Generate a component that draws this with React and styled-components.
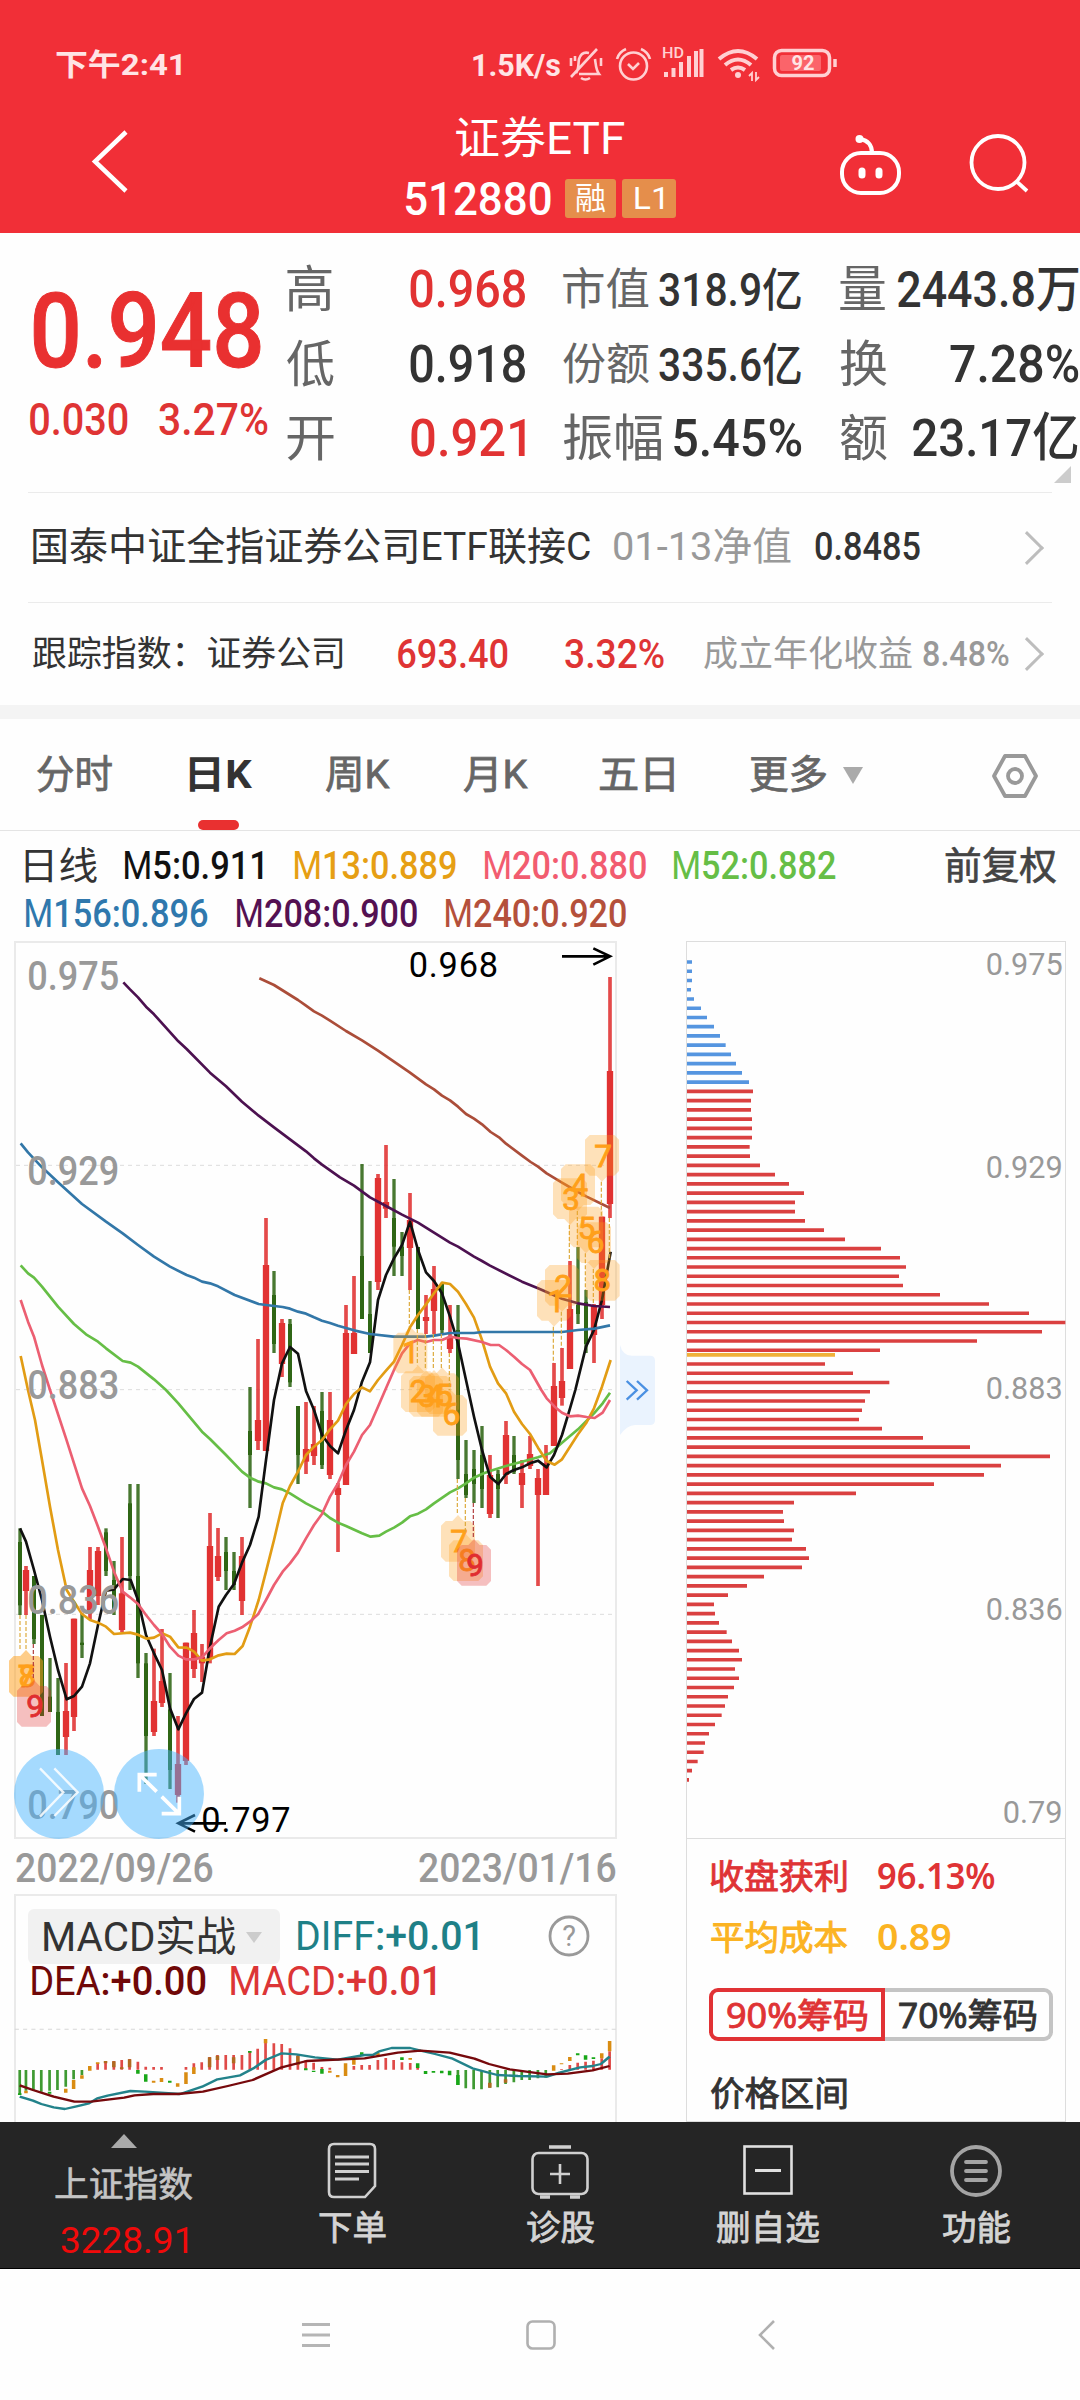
import { useLayoutEffect, useRef, useState } from "react"
import styled, { createGlobalStyle } from "styled-components"

const GlobalStyle = createGlobalStyle`
  * { box-sizing: border-box; }
  body {
    margin: 0;
    background: #fff;
    font-family: Roboto, "Noto Sans CJK SC", sans-serif;
    color: #333;
  }
  svg { display: block; flex: none; overflow: visible; }
`;

const FitBox = styled.span`
  display: block;
  flex: none;
  width: ${p => p.$w}px;
  height: ${p => p.$size}px;
  margin-left: ${p => p.$ml || 0}px;
  font-size: ${p => p.$size}px;
  line-height: ${p => p.$size}px;
  font-weight: ${p => p.$weight || 400};
  color: ${p => p.$color || "inherit"};
  -webkit-text-stroke: ${p => p.$stroke || 0}px currentColor;
  white-space: nowrap;
`;

const FitInner = styled.span`
  display: inline-block;
  transform-origin: 0 50%;
`;

// Squeezes a label so that its ink fills exactly w pixels
function Fit({ w, size, ml, weight, color, stroke, children }) {
  const ref = useRef(null)
  const [transform, setTransform] = useState("none")

  useLayoutEffect(() => {
    const el = ref.current
    const css = getComputedStyle(el)
    const ctx = document.createElement("canvas").getContext("2d")
    ctx.font = `${css.fontWeight} ${css.fontSize} ${css.fontFamily}`
    const m = ctx.measureText(el.textContent)
    const k = w / (m.actualBoundingBoxLeft + m.actualBoundingBoxRight)
    setTransform(`translateX(${m.actualBoundingBoxLeft * k}px) scaleX(${k})`)
  }, [w, size, weight, children])

  return (
    <FitBox $w={w} $size={size} $ml={ml} $weight={weight} $color={color} $stroke={stroke}>
      <FitInner ref={ref} style={{ transform }}>{children}</FitInner>
    </FitBox>
  )
}

const Screen = styled.div`
  width: 1080px;
  height: 2400px;
  overflow: hidden;
  display: flex;
  flex-direction: column;
  background: #fefefe;
`;

/* ---------- header ---------- */

const Header = styled.header`
  flex: none;
  height: 233px;
  background: #f12f37;
  color: #fff;
`;

const StatusBar = styled.div`
  display: flex;
  align-items: center;
  height: 100px;
  padding: 30px 0 0 56px;
  color: #ffe4e5;
`;

const StatusIcons = styled.div`
  display: flex;
  align-items: center;
  margin-left: 8px;
`;

const TitleBar = styled.div`
  display: grid;
  grid-template-columns: 405px 271px 1fr;
  height: 133px;
`;

const BackButton = styled.div`
  padding: 30px 0 0 91px;
`;

const TitleBlock = styled.div`
  display: flex;
  flex-direction: column;
  align-items: center;
  gap: 18px;
  padding-top: 17px;
`;

const CodeLine = styled.div`
  display: flex;
  align-items: center;
  height: 39px;
`;

const Tag = styled.span`
  display: flex;
  align-items: center;
  justify-content: center;
  width: ${p => p.$w}px;
  height: 39px;
  margin-left: ${p => p.$ml}px;
  border-radius: 3px;
  background: #e58e4b;
`;

const TitleActions = styled.div`
  display: flex;
  gap: 68px;
  padding: 33px 0 0 163px;
`;

/* ---------- quote ---------- */

const Quote = styled.section`
  position: relative;
  flex: none;
  display: flex;
  height: 259px;
`;

const PriceBlock = styled.div`
  width: 286.5px;
  padding: 47px 0 0 30px;
`;

const ChangeLine = styled.div`
  display: flex;
  margin-top: 13px;
`;

const StatGrid = styled.div`
  display: grid;
  grid-template-columns: 238px 238px 238px;
  grid-auto-rows: 74.5px;
  column-gap: 38.5px;
  padding-top: 20px;
`;

const Stat = styled.div`
  display: flex;
  align-items: center;
  justify-content: space-between;
`;

const Corner = styled.i`
  position: absolute;
  right: 9px;
  bottom: 9px;
  border-left: 17px solid transparent;
  border-bottom: 17px solid #ccc;
`;

const InfoRow = styled.div`
  flex: none;
  display: flex;
  align-items: center;
  height: ${p => p.$h}px;
  margin: 0 28px;
  padding: 0 0 0 5px;
  border-top: 1px solid #ebebeb;
`;

const Band = styled.div`
  flex: none;
  height: 14px;
  background: #f4f4f4;
`;

/* ---------- tabs ---------- */

const Tabs = styled.nav`
  flex: none;
  display: flex;
  align-items: center;
  height: 112px;
  padding: 2px 0 0 37px;
  border-bottom: 1px solid #e4e4e4;
  color: #666;
`;

const Tab = styled.div`
  position: relative;
  display: flex;
  align-items: center;
  height: 100%;
  margin-left: ${p => p.$ml || 0}px;
  color: ${p => (p.$active ? "#333" : "inherit")};

  &::after {
    content: "";
    display: ${p => (p.$active ? "block" : "none")};
    position: absolute;
    left: 8px;
    bottom: 0;
    width: 41px;
    height: 10px;
    border-radius: 5px;
    background: #e93030;
  }
`;

const Caret = styled.i`
  margin-left: ${p => p.$ml}px;
  border: ${p => p.$half}px solid transparent;
  border-top: ${p => p.$h}px solid ${p => p.$color};
  border-bottom: 0;
`;

const Legend = styled.div`
  flex: none;
  height: 110px;
  padding: 11px 0 0 25px;
`;

const LegendRow = styled.div`
  display: flex;
  align-items: center;
  height: 48px;
`;

const Thin = styled.span`
  font-weight: 400;
`;

/* ---------- charts ---------- */

const Charts = styled.main`
  flex: none;
  display: flex;
  height: 1181px;
  padding-left: 14px;
  overflow: hidden;
`;

const LeftColumn = styled.div`
  width: 603px;
`;

const KBox = styled.div`
  height: 898px;
  border: 2px solid #eaeaea;
`;

const Dates = styled.div`
  display: flex;
  align-items: center;
  justify-content: space-between;
  height: 55px;
  padding: 5px 1px 0 2px;
  color: #999;
`;

const MacdBox = styled.div`
  height: 240px;
  border: 2px solid #eaeaea;
`;

const MacdHead = styled.div`
  display: flex;
  align-items: center;
  height: 56px;
  margin: 12px 0 0 12px;
`;

const Chip = styled.div`
  display: flex;
  align-items: center;
  width: 252px;
  height: 55px;
  padding: 2px 0 0 16px;
  border-radius: 6px;
  background: #f1f1f1;
`;

const MacdSub = styled.div`
  display: flex;
  align-items: center;
  height: 32px;
  padding: 2px 0 0 15px;
`;

const HelpIcon = styled.svg`
  margin-left: 70px;
`;

const Drawer = styled.div`
  width: 35px;
  margin: 404px 31px 0 3px;
`;

const ChipPanel = styled.aside`
  width: 380px;
  border: 1px solid #ddd;
`;

const Distribution = styled.div`
  height: 897px;
  border-bottom: 1px solid #ddd;
`;

const ChipInfo = styled.div`
  padding: 6px 0 0 24px;
  font-family: "Noto Sans", "Noto Sans CJK SC", sans-serif;
`;

const ChipLine = styled.div`
  display: flex;
  align-items: center;
  height: 61px;
  color: ${p => p.$color};
`;

const Segment = styled.div`
  display: flex;
  margin: 21px 0 21px -2px;
`;

const SegmentItem = styled.div`
  display: flex;
  align-items: center;
  justify-content: center;
  width: ${p => (p.$active ? 176 : 168)}px;
  height: 53px;
  border: 4px solid ${p => (p.$active ? "#e13235" : "#c4c4c4")};
  border-left-width: ${p => (p.$active ? 4 : 0)}px;
  border-radius: ${p => (p.$active ? "9px 0 0 9px" : "0 9px 9px 0")};
  color: ${p => (p.$active ? "#df3335" : "#333")};
`;

/* ---------- bottom ---------- */

const Toolbar = styled.footer`
  flex: none;
  display: grid;
  grid-template-columns: 248px 208px 208px 208px 208px;
  height: 147px;
  border-bottom: 1px solid #000;
  background: #252525;
  color: #d4d4d4;
`;

const IndexItem = styled.div`
  display: flex;
  flex-direction: column;
  align-items: center;
  padding-top: 12px;
`;

const IndexArrow = styled.i`
  margin-bottom: 20px;
  border: 13px solid transparent;
  border-top: 0;
  border-bottom: 14px solid #aaa;
`;

const IndexValue = styled.div`
  margin-top: 20px;
`;

const Tool = styled.div`
  display: flex;
  flex-direction: column;
  align-items: center;
  padding-top: 18px;
  gap: 11px;
`;

const SystemNav = styled.div`
  display: flex;
  justify-content: space-between;
  align-items: center;
  width: 477px;
  height: 133px;
  margin-left: 300px;
`;

/* ---------- data ---------- */

const RED = "#e13232"
const GREEN = "#2f6615"

// [high, low, body top, body bottom, up]
const candles = [
  [1795, 2055, 1836, 2026, 0], [1908, 2055, 1920, 1983, 1], [1938, 2142, 1938, 2127, 0], [2055, 2358, 2055, 2358, 0],
  [2184, 2346, 2300, 2346, 0], [2244, 2475, 2346, 2475, 0], [2199, 2475, 2343, 2421, 1], [2066, 2403, 2066, 2361, 1],
  [2050, 2184, 2138, 2145, 0], [1851, 2068, 1920, 2050, 1], [1851, 2025, 1863, 1998, 1], [1795, 1938, 1807, 1923, 0],
  [1893, 2055, 1950, 2040, 0], [1821, 2106, 1990, 2100, 1], [1662, 1980, 1720, 1938, 0], [1662, 2244, 1938, 2200, 0],
  [2169, 2562, 2200, 2418, 0], [2156, 2418, 2313, 2406, 1], [2097, 2331, 2253, 2319, 1], [2229, 2577, 2338, 2520, 0],
  [2358, 2618, 2502, 2595, 1], [2138, 2505, 2138, 2493, 1], [2040, 2244, 2109, 2217, 1], [2142, 2256, 2180, 2200, 1],
  [1749, 2200, 1848, 2185, 1], [1794, 1953, 1878, 1941, 1], [1821, 1980, 1866, 1923, 0], [1866, 1980, 1923, 1965, 0],
  [1821, 2055, 1878, 2013, 1], [1371, 1734, 1503, 1575, 0], [1227, 1560, 1470, 1533, 1], [864, 1563, 1005, 1563, 1],
  [1023, 1269, 1095, 1242, 0], [1167, 1341, 1179, 1302, 1], [1167, 1371, 1182, 1357, 0], [1428, 1662, 1428, 1575, 0],
  [1416, 1632, 1557, 1595, 1], [1428, 1605, 1542, 1578, 1], [1386, 1617, 1443, 1605, 0], [1386, 1647, 1470, 1635, 1],
  [1659, 1866, 1674, 1695, 1], [1125, 1665, 1209, 1665, 1], [1038, 1272, 1209, 1272, 1], [702, 1167, 978, 1167, 0],
  [1053, 1269, 1152, 1269, 0], [732, 1080, 744, 1056, 1], [645, 864, 816, 836, 1], [747, 1038, 864, 950, 0],
  [906, 1038, 950, 978, 0], [789, 1080, 870, 954, 1], [951, 1197, 951, 1197, 0], [1095, 1212, 1161, 1173, 1],
  [1008, 1212, 1077, 1143, 1], [1062, 1212, 1062, 1200, 0], [1125, 1269, 1220, 1257, 1], [1125, 1647, 1200, 1590, 0],
  [1530, 1704, 1632, 1695, 0], [1560, 1719, 1617, 1662, 0], [1488, 1734, 1575, 1677, 0], [1575, 1764, 1635, 1752, 1],
  [1620, 1764, 1632, 1677, 0], [1473, 1662, 1515, 1635, 1], [1518, 1632, 1575, 1626, 0], [1590, 1734, 1629, 1665, 1],
  [1518, 1617, 1572, 1608, 1], [1617, 1968, 1644, 1695, 1], [1545, 1695, 1600, 1695, 1], [1299, 1548, 1368, 1548, 1],
  [1254, 1427, 1353, 1404, 1], [993, 1317, 1137, 1317, 1], [951, 1182, 1125, 1152, 0], [1080, 1269, 1116, 1242, 0],
  [1122, 1299, 1125, 1215, 1], [860, 1167, 860, 1125, 1], [141, 864, 423, 822, 1],
]

// the chart is split in four tiles; every run of points is local to its tile
const tiles = { tl: [0, 0], bl: [0, 1350], tr: [960, 0], br: [960, 1350] }
const trace = runs =>
  runs
    .map(([tile, pts]) =>
      pts
        .split(" ")
        .map(p => p.split(",").map((v, k) => +v + tiles[tile][k]).join(","))
        .join(" ")
    )
    .join(" ")

const averages = [
  { color: "#66be46", runs: [
    ["tl", "62,1006 84,1030 102,1043 126,1070 174,1130 222,1182 258,1213 294,1235 318,1255 368,1293 392,1298 414,1310 462,1348 498,1380"],
    ["bl", "535,70 606,155 630,177 678,225 726,275 750,293 776,305 798,310 822,322 846,328 870,340 918,370 966,395"],
    ["br", "30,414 54,428 78,438 126,460 152,470 178,467 198,455 222,443 246,428 270,409 294,401 318,388 342,370 390,337 414,325 438,310 462,293 486,282 510,273 558,258 606,245 654,232 690,220 726,188 774,148 822,100 848,70 870,38"],
  ] },
  { color: "#111", runs: [
    ["bl", "60,445 78,485 102,570 126,660 150,770 174,870 200,958 222,948 246,920 270,850 294,735 318,632 342,628 368,597 392,600 414,660 438,765 462,820 486,870 510,985 535,1048 558,1000 582,957 606,938 630,800 656,680 678,645 702,612 726,548 750,495 776,410 798,240 822,60"],
    ["tl", "846,1300 870,1251 894,1271 918,1383"],
    ["bl", "942,90 966,165"],
    ["br", "30,198 54,220 78,150 102,90 126,5"],
    ["tr", "150,1297 174,1110 198,1035 222,985 246,945 270,875 294,960 318,1027 342,1053 366,1090 390,1160 414,1240 438,1350"],
    ["br", "462,110 486,210 510,290 535,312 558,282 582,270 606,262 630,250 654,242 680,262 702,225 726,165 750,85"],
    ["tr", "766,1380 798,1250 822,1200 846,1110 872,965"],
  ] },
  { color: "#e29c14", runs: [
    ["tl", "62,1278 84,1380"],
    ["bl", "105,120 126,240 150,380 174,510 200,630 222,665 246,702 270,720 294,728 318,740 342,762 390,758 414,764 440,776 462,773 486,760 510,770 535,802 560,803 582,815 606,842 630,838 656,826 680,821 704,822 728,798 750,740 776,660 798,575 822,480 848,370 870,318 894,275 918,225 942,200 966,180"],
    ["br", "30,148 54,122 78,72 102,42 126,22 150,34"],
    ["tr", "174,1350 198,1322 222,1295 246,1245 270,1192 294,1155 318,1123 342,1090 366,1058 390,1062 414,1085 438,1122 462,1163 486,1230 510,1310 534,1360"],
    ["br", "558,40 582,95 606,132 630,162 654,203 680,243 704,254 726,238 750,200 774,163 798,130 822,85 846,20"],
    ["tr", "872,1290"],
  ] },
  { color: "#ec5f72", runs: [
    ["tl", "62,1110 84,1175 102,1220 126,1305 150,1380"],
    ["bl", "162,66 198,175 222,250 246,325 270,378 294,440 318,505 342,575 368,635 390,652 414,672 438,705 462,735 486,762 510,800 535,827 558,838 582,838 606,832 630,805 656,780 680,760 704,752 726,742 750,725 774,703 798,660 822,615 848,575 870,550 894,518 918,475 942,435 966,402"],
    ["br", "30,350 54,310 78,255 102,215 126,165 150,135 174,80 198,25"],
    ["tr", "222,1320 246,1270 270,1240 294,1230 318,1236 342,1230 366,1230 390,1220 414,1224 440,1226 486,1236 512,1245 537,1245 558,1260 582,1280 606,1302 630,1320 664,1380"],
    ["br", "680,55 704,80 726,98 750,109 774,107 800,111 824,114 848,98 870,60"],
  ] },
  { color: "#3277a8", runs: [
    ["tl", "62,640 84,667 126,712 174,757 246,822 318,875 368,910 414,945 462,980 510,1010 560,1035 582,1043 606,1055 630,1060 654,1069 704,1095 776,1122 798,1125 848,1131 870,1136 894,1145 918,1151 942,1162 966,1172"],
    ["tr", "30,1179 54,1187 102,1201 150,1212 220,1220 318,1220 342,1217 390,1209 462,1209 486,1206 726,1206 774,1200 824,1196 870,1186"],
  ] },
  { color: "#4c1150", runs: [
    ["tl", "370,157 390,178 414,202 438,230 462,253 535,334 560,357 630,428 678,469 726,515 776,557 822,592 870,628 918,664 942,685 966,704"],
    ["tr", "60,742 102,767 150,802 198,828 246,854 294,878 342,908 390,938 414,950 462,980 486,993 510,1007 606,1055 654,1075 702,1096 726,1106 774,1120 822,1128 870,1131"],
  ] },
  { color: "#ab4d39", runs: [
    ["tl", "778,145 822,165 894,210 918,227 942,244 966,257"],
    ["tr", "30,272 78,303 126,331 174,362 222,395 270,428 318,463 342,478 366,497 390,511 414,530 438,552 462,566 486,583 512,606 537,622 558,641 606,677 632,696 654,710 680,730 726,758 774,786 800,800 870,834"],
  ] },
]

// [digit, box left, box top, label x, label baseline, pointer side, dash x, dash from, dash to]
const signals = [
  ["7", 27, 2178, 80, 2272, "up", 60, 2055, 2162],
  ["8", 27, 2178, 82, 2272, "up", 78, 2055, 2162],
  ["9", 51, 2268, 105, 2360, "up", 100, 2142, 2250],
  ["1", 1180, 1208, 1232, 1299, "up", 1228, 1080, 1190],
  ["2", 1203, 1324, 1255, 1417, "up", 1252, 1197, 1306],
  ["3", 1227, 1338, 1281, 1430, "up", 1276, 1212, 1320],
  ["4", 1251, 1338, 1304, 1430, "up", 1300, 1212, 1320],
  ["5", 1275, 1330, 1332, 1428, "up", 1324, 1212, 1320],
  ["6", 1299, 1395, 1354, 1486, "up", 1348, 1269, 1380],
  ["7", 1323, 1773, 1377, 1865, "up", 1372, 1647, 1755],
  ["8", 1347, 1831, 1401, 1923, "up", 1396, 1704, 1812],
  ["9", 1371, 1845, 1425, 1937, "up", 1420, 1719, 1827],
  ["1", 1611, 1050, 1668, 1145, "down", 1660, 1190, 1299],
  ["2", 1635, 1005, 1689, 1102, "down", 1684, 1145, 1254],
  ["3", 1659, 745, 1713, 840, "down", 1708, 885, 993],
  ["4", 1683, 703, 1738, 797, "down", 1732, 843, 951],
  ["5", 1707, 830, 1760, 926, "down", 1756, 970, 1080],
  ["6", 1731, 877, 1787, 970, "down", 1780, 1017, 1122],
  ["7", 1755, 615, 1809, 710, "down", 1804, 755, 860],
  ["8", 1757, 990, 1807, 1083, "none", 1828, 864, 990],
]

const chipsAbove = [16, 16, 16, 13, 22, 43, 61, 82, 100, 117, 133, 148, 166, 187]
const chipsUpper = [
  199, 193, 193, 196, 196, 196, 189, 190, 220, 265, 307, 352, 325, 325, 355, 412, 475, 583, 640, 658, 637, 649, 760, 907,
  1027, 1136, 1066, 871, 580,
]
const chipsLower = [
  415, 499, 608, 550, 535, 526, 517, 586, 709, 850, 1090, 943, 892, 742, 508, 322, 289, 292, 322, 316, 358, 367, 346, 232,
  181, 124, 82, 85, 97, 120, 136, 157, 166, 145, 157, 142, 124, 115, 105, 85, 67, 55, 51, 33, 16, 7,
]

// [x, y1, y2] for each colour of the MACD histogram
const macdBars = [
  { color: "#3f9a32", bars: [
    [48, 720, 792], [63, 720, 782], [81, 720, 782], [100, 720, 785], [120, 720, 782], [139, 720, 780], [159, 720, 770],
    [178, 720, 748], [198, 720, 735], [1105, 720, 765], [1124, 720, 775], [1143, 720, 778], [1162, 720, 778],
    [1182, 720, 773], [1201, 720, 772], [1220, 720, 762], [1240, 720, 757], [1259, 720, 750], [1278, 720, 750],
    [1298, 720, 745], [1317, 720, 743],
  ] },
  { color: "#df4a48", bars: [
    [236, 700, 719], [255, 693, 719], [275, 693, 719], [294, 690, 719], [313, 687, 719], [333, 695, 719], [352, 710, 719],
    [371, 711, 719], [390, 711, 719], [449, 711, 719], [468, 700, 719], [487, 697, 719], [506, 681, 719], [525, 675, 719],
    [545, 675, 719], [564, 675, 719], [584, 675, 719], [603, 663, 719], [622, 656, 719], [641, 636, 719], [661, 640, 719],
    [680, 642, 719], [700, 655, 719], [719, 675, 719], [738, 690, 719], [757, 698, 719], [777, 711, 719], [796, 713, 719],
    [854, 708, 719], [873, 705, 719], [892, 705, 719], [912, 690, 719], [931, 684, 719], [950, 690, 719], [970, 697, 719],
    [990, 699, 719], [1008, 714, 719], [1355, 717, 719], [1375, 705, 719], [1394, 698, 719], [1413, 695, 719],
    [1432, 692, 719], [1452, 685, 719], [1471, 664, 719],
  ] },
]

const macdMarks = [
  { color: "#d98c12", bars: [
    [63, 782, 790], [159, 776, 788], [178, 750, 777], [198, 736, 746], [217, 708, 722], [236, 697, 702], [371, 752, 758],
    [390, 744, 756], [429, 760, 770], [449, 727, 762], [468, 712, 732], [641, 627, 640], [796, 722, 728], [815, 735, 742],
    [834, 700, 738], [854, 690, 704], [912, 668, 676], [990, 684, 689], [1336, 706, 722], [1355, 700, 703],
    [1375, 681, 693], [1452, 670, 685], [1471, 633, 664],
  ] },
  { color: "#18a718", bars: [
    [48, 790, 795], [120, 785, 791], [333, 720, 731], [352, 733, 755], [410, 752, 758], [603, 663, 668], [738, 715, 721],
    [757, 722, 726], [777, 717, 731], [873, 667, 678], [970, 682, 690], [1008, 700, 714], [1027, 723, 732],
    [1046, 723, 728], [1066, 722, 730], [1085, 722, 736], [1105, 735, 765], [1394, 670, 676], [1413, 676, 689],
    [1432, 682, 687],
  ] },
  { color: "#b06a20", bars: [
    [255, 693, 700], [275, 694, 712], [294, 712, 717], [313, 688, 712], [506, 682, 712], [525, 677, 690],
    [564, 682, 700], [719, 678, 705], [1182, 758, 773], [1220, 748, 758],
  ] },
]

/* ---------- drawings ---------- */

const badgePath = (x, y, dir) => {
  const top = dir === "up" ? `H${x + 34}L${x + 51} ${y - 18}L${x + 68} ${y}` : ""
  const bottom = dir === "down" ? `H${x + 68}L${x + 51} ${y + 140}L${x + 34} ${y + 122}` : ""
  return `M${x + 14} ${y}${top}H${x + 88}L${x + 102} ${y + 14}V${y + 108}L${x + 88} ${y + 122}${bottom}H${x + 14}L${x} ${y + 108}V${y + 14}Z`
}

function KChart() {
  return (
    <svg width="599" height="894" viewBox="48 39 1797 2682" fontFamily="Roboto, sans-serif">
      <g stroke="#dcdcdc" strokeWidth="3" strokeDasharray="12 12">
        <path d="M48 706H1845M48 1379H1845M48 2053H1845" />
      </g>
      {candles.map(([high, low, top, bottom, up], i) => {
        const x = i ? 54 + 24 * i : 60
        return (
          <g key={i} stroke={up ? RED : GREEN}>
            <path d={`M${x} ${high}V${low}`} strokeWidth={up ? 11 : 10} opacity=".88" />
            <path d={`M${x} ${top}V${bottom}`} strokeWidth={up ? 19 : 12} />
          </g>
        )
      })}
      <g fill="none" strokeWidth="8" strokeLinejoin="round">
        {averages.map(({ color, runs }) => (
          <polyline key={color} stroke={color} points={trace(runs)} />
        ))}
      </g>
      {signals.map(([digit, x, y, tx, ty, dir, dx, from, to], i) => {
        const color = digit === "9" ? "#e02d30" : "#ffa01a"
        return (
          <g key={i}>
            <path d={`M${dx} ${from}V${to}`} stroke={digit === "9" ? "#b03a3a" : "#dca838"} strokeWidth="3.5" strokeDasharray="12 6" />
            <path d={badgePath(x, y, dir)} fill={color} fillOpacity=".3" />
            <text x={tx} y={ty} fill={color} stroke={color} strokeWidth="2.5" fontSize="94" textAnchor="middle">{digit}</text>
          </g>
        )
      })}
      <g fill="#999" fontSize="121" fontWeight="500">
        <text x="82" y="180" textLength="276" lengthAdjust="spacingAndGlyphs">0.975</text>
        <text x="82" y="765" textLength="276" lengthAdjust="spacingAndGlyphs">0.929</text>
        <text x="82" y="1407" textLength="276" lengthAdjust="spacingAndGlyphs">0.883</text>
        <text x="82" y="2052" textLength="276" lengthAdjust="spacingAndGlyphs">0.836</text>
        <text x="82" y="2666" textLength="276" lengthAdjust="spacingAndGlyphs">0.790</text>
      </g>
      <g fill="#000" fontSize="103">
        <text x="1226" y="141" textLength="268">0.968</text>
        <text x="604" y="2706" textLength="268">0.797</text>
      </g>
      <path d="M1686 79H1828M1780 55L1830 79L1780 104M678 2680H538M585 2655L535 2680L585 2705" fill="none" stroke="#000" strokeWidth="8" />
      <circle cx="177" cy="2592" r="135" fill="#46b4ff" fillOpacity=".48" />
      <circle cx="477" cy="2592" r="135" fill="#46b4ff" fillOpacity=".48" />
      <g fill="none" stroke="#fff">
        <path d="M120 2515L190 2587L120 2660M163 2515L233 2587L163 2658" strokeWidth="7" opacity=".85" />
        <path d="M470 2585L420 2536M418 2585V2534H470M485 2600L536 2650M485 2651H538V2600" strokeWidth="11" />
      </g>
    </svg>
  )
}

function MacdChart() {
  return (
    <svg width="599" height="126" viewBox="39 498 1445 378" preserveAspectRatio="none">
      <path d="M36 598H1486" stroke="#d8d8d8" strokeWidth="3" strokeDasharray="10 10" />
      {macdBars.map(({ color, bars }) => (
        <path key={color} d={bars.map(([x, a, b]) => `M${x} ${a}V${b}`).join("")} stroke={color} strokeWidth="6.5" />
      ))}
      {macdMarks.map(({ color, bars }) => (
        <path key={color} d={bars.map(([x, a, b]) => `M${x} ${a}V${b}`).join("")} stroke={color} strokeWidth="8.5" />
      ))}
      <g fill="none" strokeWidth="7" strokeLinejoin="round">
        <polyline
          stroke="#22828a"
          points="48,800 80,812 100,822 130,832 157,837 185,829 215,820 235,805 260,797 315,783 350,785 435,792 488,770 525,748 580,736 612,715 641,690 680,670 715,673 760,682 815,689 880,675 900,675 915,664 945,654 990,654 1015,662 1050,672 1090,685 1140,715 1200,735 1250,738 1320,740 1350,728 1400,712 1430,708 1450,702 1471,680"
        />
        <polyline
          stroke="#76090c"
          points="48,766 80,780 130,800 180,815 220,815 300,803 325,796 370,792 430,792 490,785 550,768 610,750 680,712 740,693 880,685 960,668 1015,662 1085,668 1145,686 1180,702 1230,718 1270,725 1320,733 1370,731 1430,721 1471,708"
        />
      </g>
    </svg>
  )
}

const PITCH = 27.73

function DistributionChart() {
  const bar = (w, y) => `M81 ${y}H${80 + w}`
  return (
    <svg width="378" height="896" viewBox="81 36 1134 2688" fontFamily="Roboto, sans-serif">
      <g strokeWidth="11">
        <path stroke="#5595e0" d={chipsAbove.map((w, i) => bar(w, 96 + i * PITCH)).join("")} />
        <path stroke="#da4040" d={chipsUpper.map((w, i) => bar(w, 96 + (i + 14) * PITCH)).join("")} />
        <path stroke="#f0b13a" d={bar(445, 1274.5)} />
        <path stroke="#da4040" d={chipsLower.map((w, i) => bar(w, 1302 + i * PITCH)).join("")} />
      </g>
      <g fill="#999" fontSize="95" textAnchor="end">
        <text x="1208" y="135" textLength="231" lengthAdjust="spacingAndGlyphs">0.975</text>
        <text x="1208" y="744" textLength="231" lengthAdjust="spacingAndGlyphs">0.929</text>
        <text x="1208" y="1407" textLength="231" lengthAdjust="spacingAndGlyphs">0.883</text>
        <text x="1208" y="2069" textLength="231" lengthAdjust="spacingAndGlyphs">0.836</text>
        <text x="1208" y="2678" textLength="180" lengthAdjust="spacingAndGlyphs">0.79</text>
      </g>
    </svg>
  )
}

const Chevron = styled.i`
  width: 24px;
  height: 24px;
  margin-left: ${p => p.$ml}px;
  border: solid #bdbdbd;
  border-width: 3px 3px 0 0;
  transform: rotate(45deg);
`;

function StatusGlyphs() {
  return (
    <svg width="272" height="38" viewBox="569 47 272 38" fill="none" stroke="#ffd0d2" strokeWidth="2.6">
      <path d="M577 74C580 70 579 66 580 60C582 54 586 53 590 54M596 60C597 67 597 71 600 75H580M598 50L572 78M582 79Q586.500 82 591 79M572 59V67M576 57V62M602 59V67" />
      <circle cx="634.5" cy="67" r="13.500" />
      <path d="M618 60Q620 53 627 50M651 60Q649 53 642 50M629 65L634 70L640 64" />
      <text x="663" y="59" fontFamily="Roboto, sans-serif" fontSize="14" fontWeight="500" fill="#ffd0d2" stroke="none" textLength="22" lengthAdjust="spacingAndGlyphs">HD</text>
      <path d="M667 78V73M674.500 78V69M682 78V63M690 78V57M697 78V52M702.500 78V50" strokeWidth="4" />
      <path d="M720 60Q739 44 758 60M726 66Q739 55 752 66M732 71Q739 66 746 71" strokeWidth="4" />
      <circle cx="739" cy="76" r="3" fill="#ffd0d2" stroke="none" />
      <path d="M753 82V74L750 77M757 73V81L760 78" strokeWidth="1.800" />
      <rect x="775.500" y="51.500" width="55" height="25" rx="7" strokeWidth="3.500" />
      <path d="M836 60V68" strokeWidth="3.500" />
      <rect x="781" y="56" width="41" height="16" rx="2" fill="#ff7b80" stroke="none" opacity=".7" />
      <text x="804" y="71" fontFamily="Roboto, sans-serif" fontSize="20" fontWeight="700" fill="#ffe4e5" stroke="none" textAnchor="middle">92</text>
    </svg>
  )
}

const stats = [
  [["高", 45, 50], ["0.968", 115, 52, "#e13232"]],
  [["市值", 86, 44], ["318.9亿", 142, 46]],
  [["量", 45, 50], ["2443.8万", 180, 50]],
  [["低", 47, 50], ["0.918", 115, 52]],
  [["份额", 86, 44], ["335.6亿", 142, 46]],
  [["换", 47, 50], ["7.28%", 128, 52]],
  [["开", 47, 50], ["0.921", 114, 52, "#e13232"]],
  [["振幅", 99, 50], ["5.45%", 127, 52]],
  [["额", 47, 50], ["23.17亿", 165, 52]],
]

const M = ({ v, w, ml, color }) => (
  <Fit w={w} ml={ml} size={38} weight={500} color={color}><Thin>M</Thin>{v}</Fit>
)

export default function App() {
  return (
    <Screen>
      <GlobalStyle />
      <Header>
        <StatusBar>
          <Fit w={125} size={30} weight={700}>下午2:41</Fit>
          <Fit w={87} size={31} ml={292} weight={700}>1.5K/s</Fit>
          <StatusIcons><StatusGlyphs /></StatusIcons>
        </StatusBar>
        <TitleBar>
          <BackButton>
            <svg width="38" height="64" viewBox="91 130 38 64" fill="none" stroke="#fff" strokeWidth="4.500">
              <path d="M126 132L95 161.500L126 191" />
            </svg>
          </BackButton>
          <TitleBlock>
            <Fit w={169} size={44}>证券ETF</Fit>
            <CodeLine>
              <Fit w={146} size={47} weight={500}>512880</Fit>
              <Tag $w={51} $ml={14}><Fit w={29} size={31}>融</Fit></Tag>
              <Tag $w={54} $ml={6}><Fit w={29} size={31}>L1</Fit></Tag>
            </CodeLine>
          </TitleBlock>
          <TitleActions>
            <svg width="63" height="64" viewBox="839 133 63 64" fill="none" stroke="#fff" strokeWidth="4">
              <path d="M872 153Q872 141 860 139" />
              <circle cx="859.500" cy="139" r="4" fill="#fff" stroke="none" />
              <rect x="842" y="153" width="57" height="40" rx="19" />
              <path d="M862 171V175M879 171V175" strokeWidth="7" strokeLinecap="round" />
            </svg>
            <svg width="60" height="64" viewBox="970 133 60 64" fill="none" stroke="#fff" strokeWidth="3.800">
              <circle cx="998" cy="162.500" r="26.500" />
              <path d="M1016 181L1027 191" />
            </svg>
          </TitleActions>
        </TitleBar>
      </Header>

      <Quote>
        <PriceBlock>
          <Fit w={226} size={104} ml={4} weight={500} stroke={1} color="#e93030">0.948</Fit>
          <ChangeLine>
            <Fit w={98} size={45} weight={500} color="#df3434">0.030</Fit>
            <Fit w={109} size={45} ml={31} weight={500} color="#df3434">3.27%</Fit>
          </ChangeLine>
        </PriceBlock>
        <StatGrid>
          {stats.map(([[label, lw, ls], [value, vw, vs, color]]) => (
            <Stat key={label}>
              <Fit w={lw} size={ls} color="#666">{label}</Fit>
              <Fit w={vw} size={vs} weight={500} color={color}>{value}</Fit>
            </Stat>
          ))}
        </StatGrid>
        <Corner />
      </Quote>

      <InfoRow $h={110}>
        <Fit w={557} size={39}>国泰中证全指证券公司ETF联接C</Fit>
        <Fit w={177} size={39} ml={24} color="#999">01-13净值</Fit>
        <Fit w={105} size={39} ml={24} weight={500}>0.8485</Fit>
        <Chevron $ml={95} />
      </InfoRow>
      <InfoRow $h={103}>
        <Fit w={310} size={35}>跟踪指数：证券公司</Fit>
        <Fit w={110} size={41} ml={55} weight={500} color="#df3434">693.40</Fit>
        <Fit w={99} size={41} ml={57} weight={500} color="#df3434">3.32%</Fit>
        <Fit w={208} size={35} ml={40} color="#999">成立年化收益</Fit>
        <Fit w={86} size={35} ml={11} weight={500} color="#999">8.48%</Fit>
        <Chevron $ml={6} />
      </InfoRow>
      <Band />

      <Tabs>
        <Tab><Fit w={75} size={39} stroke={0.8}>分时</Fit></Tab>
        <Tab $ml={78} $active><Fit w={63} size={39} weight={700}>日K</Fit></Tab>
        <Tab $ml={73}><Fit w={64} size={39} stroke={0.8}>周K</Fit></Tab>
        <Tab $ml={74}><Fit w={64} size={39} stroke={0.8}>月K</Fit></Tab>
        <Tab $ml={72}><Fit w={74} size={39} stroke={0.8}>五日</Fit></Tab>
        <Tab $ml={76}>
          <Fit w={76} size={39} stroke={0.8}>更多</Fit>
          <Caret $ml={17} $half={10} $h={17} $color="#aaa" />
        </Tab>
        <Tab $ml={128}>
          <svg width="48" height="48" viewBox="0 0 48 48" fill="none" stroke="#999" strokeWidth="3.800" strokeLinejoin="round">
            <path d="M14 4H34L45 24L34 44H14L3 24Z" />
            <circle cx="24" cy="24" r="7" />
          </svg>
        </Tab>
      </Tabs>

      <Legend>
        <LegendRow>
          <Fit w={72} size={38}>日线</Fit>
          <M v="5:0.911" w={139} ml={27} color="#111" />
          <M v="13:0.889" w={162} ml={31} color="#e69f14" />
          <M v="20:0.880" w={162} ml={28} color="#f25c70" />
          <M v="52:0.882" w={163} ml={27} color="#66be46" />
          <Fit w={110} size={38} ml={110} stroke={0.7} color="#444">前复权</Fit>
        </LegendRow>
        <LegendRow>
          <M v="156:0.896" w={183} color="#2f78ad" />
          <M v="208:0.900" w={181} ml={28} color="#541152" />
          <M v="240:0.920" w={181} ml={28} color="#b4503b" />
        </LegendRow>
      </Legend>

      <Charts>
        <LeftColumn>
          <KBox><KChart /></KBox>
          <Dates>
            <Fit w={197} size={40} weight={500}>2022/09/26</Fit>
            <Fit w={197} size={40} weight={500}>2023/01/16</Fit>
          </Dates>
          <MacdBox>
            <MacdHead>
              <Chip>
                <Fit w={191} size={41}>MACD实战</Fit>
                <Caret $ml={11} $half={8.5} $h={11} $color="#ccc" />
              </Chip>
              <Fit w={181} size={41} ml={17} weight={500} color="#1e8087"><Thin>DIFF</Thin>:+0.01</Fit>
              <HelpIcon width="42" height="42" viewBox="0 0 42 42">
                <circle cx="21" cy="21" r="19" fill="none" stroke="#999" strokeWidth="2.800" />
                <text x="21" y="31" fontFamily="Roboto, sans-serif" fontSize="29" fill="#999" textAnchor="middle">?</text>
              </HelpIcon>
            </MacdHead>
            <MacdSub>
              <Fit w={175} size={41} weight={500} color="#700808"><Thin>DEA</Thin>:+0.00</Fit>
              <Fit w={206} size={41} ml={24} weight={500} color="#dc3536"><Thin>MACD</Thin>:+0.01</Fit>
            </MacdSub>
            <MacdChart />
          </MacdBox>
        </LeftColumn>
        <Drawer>
          <svg width="35" height="90" viewBox="900 1245 105 270">
            <path d="M900 1245Q908 1277 935 1277H990Q1005 1277 1005 1292V1470Q1005 1485 990 1485H945Q922 1485 900 1515Z" fill="#eaf3fe" />
            <path d="M920 1353L950 1381L920 1409M951 1353L981 1381L951 1409" fill="none" stroke="#4a90e2" strokeWidth="7" />
          </svg>
        </Drawer>
        <ChipPanel>
          <Distribution><DistributionChart /></Distribution>
          <ChipInfo>
            <ChipLine $color="#df3335">
              <Fit w={136} size={34} stroke={0.9}>收盘获利</Fit>
              <Fit w={117} size={36} ml={31} weight={600}>96.13%</Fit>
            </ChipLine>
            <ChipLine $color="#fbb322">
              <Fit w={136} size={34} stroke={0.9}>平均成本</Fit>
              <Fit w={73} size={36} ml={31} weight={600}>0.89</Fit>
            </ChipLine>
            <Segment>
              <SegmentItem $active><Fit w={140} size={34} stroke={0.9}>90%筹码</Fit></SegmentItem>
              <SegmentItem><Fit w={137} size={34} stroke={0.9}>70%筹码</Fit></SegmentItem>
            </Segment>
            <ChipLine $color="#333">
              <Fit w={136} size={34} stroke={0.9}>价格区间</Fit>
            </ChipLine>
          </ChipInfo>
        </ChipPanel>
      </Charts>

      <Toolbar>
        <IndexItem>
          <IndexArrow />
          <Fit w={138} size={35} stroke={0.6} color="#c4c4c4">上证指数</Fit>
          <IndexValue><Fit w={126} size={36} color="#f00a0a">3228.91</Fit></IndexValue>
        </IndexItem>
        <Tool>
          <svg width="60" height="60" viewBox="0 0 60 60" fill="none" stroke="#d0d0d0" strokeWidth="2.600">
            <path d="M12 4H48Q53 4 53 9V46L43 57H12Q7 57 7 52V9Q7 4 12 4Z" />
            <path d="M13 17H47M13 24H47M13 31.500H47M13 39H37" strokeWidth="3" />
          </svg>
          <Fit w={67} size={34} stroke={0.8}>下单</Fit>
        </Tool>
        <Tool>
          <svg width="60" height="60" viewBox="0 0 60 60" fill="none" stroke="#d0d0d0" strokeWidth="2.600">
            <rect x="2.500" y="13" width="55" height="41" rx="6" />
            <path d="M19 7H41M10 57H20M40 57H50" strokeWidth="3.500" />
            <path d="M30 24V44M20 34H40" />
          </svg>
          <Fit w={67} size={34} stroke={0.8}>诊股</Fit>
        </Tool>
        <Tool>
          <svg width="60" height="60" viewBox="0 0 60 60" fill="none" stroke="#e0e0e0" strokeWidth="2.600">
            <rect x="6.500" y="6.500" width="47" height="47" />
            <path d="M17 30.500H43" strokeWidth="3" />
          </svg>
          <Fit w={102} size={34} stroke={0.8}>删自选</Fit>
        </Tool>
        <Tool>
          <svg width="60" height="60" viewBox="0 0 60 60" fill="none" stroke="#a4a4a4" strokeWidth="3.800">
            <circle cx="30" cy="31" r="24" />
            <path d="M20 22H40M20 31H40M20 40H40" strokeLinecap="round" />
          </svg>
          <Fit w={67} size={34} stroke={0.8}>功能</Fit>
        </Tool>
      </Toolbar>

      <SystemNav>
        <svg width="32" height="32" viewBox="0 0 32 32" stroke="#b5b5b5" strokeWidth="2.800">
          <path d="M2 5.500H30M2 16H30M2 26.500H30" />
        </svg>
        <svg width="32" height="32" viewBox="0 0 32 32" fill="none" stroke="#b0b0b0" strokeWidth="2.600">
          <rect x="2.500" y="2.500" width="27" height="27" rx="5" />
        </svg>
        <svg width="27" height="32" viewBox="-7 0 27 32" fill="none" stroke="#b0b0b0" strokeWidth="2.600">
          <path d="M17 2L3 16L17 30" />
        </svg>
      </SystemNav>
    </Screen>
  )
}
